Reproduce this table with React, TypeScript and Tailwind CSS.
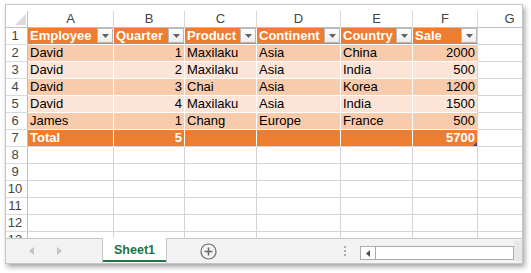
import React from 'react';

interface Col {
  letter: string;
  w: string;
}

const cols: Col[] = [
  { letter: 'A', w: 'w-[86px]' },
  { letter: 'B', w: 'w-[71px]' },
  { letter: 'C', w: 'w-[72px]' },
  { letter: 'D', w: 'w-[84px]' },
  { letter: 'E', w: 'w-[72px]' },
  { letter: 'F', w: 'w-[65px]' },
  { letter: 'G', w: 'w-[64px]' },
];

const headers = ['Employee', 'Quarter', 'Product', 'Continent', 'Country', 'Sale'];

const rows: (string | number)[][] = [
  ['David', 1, 'Maxilaku', 'Asia', 'China', 2000],
  ['David', 2, 'Maxilaku', 'Asia', 'India', 500],
  ['David', 3, 'Chai', 'Asia', 'Korea', 1200],
  ['David', 4, 'Maxilaku', 'Asia', 'India', 1500],
  ['James', 1, 'Chang', 'Europe', 'France', 500],
];

const totals: (string | number)[] = ['Total', 5, '', '', '', 5700];

const FilterButton: React.FC = () => (
  <div className="flex-none w-[16px] h-[15px] mb-px border border-[#b8b8b8] bg-gradient-to-b from-white to-[#ededed] flex items-center justify-center">
    <svg width="7" height="4" viewBox="0 0 7 4">
      <path d="M0 0 H7 L3.5 4 Z" fill="#606060" />
    </svg>
  </div>
);

const RowHeader: React.FC<{ n: number }> = ({ n }) => (
  <div className="flex-none w-[22px] h-[17px] border-r border-b border-r-[#bfbfbf] border-b-[#dadada] text-[13px] leading-[16px] text-[#444] text-center pr-[3px]">
    {n}
  </div>
);

const App: React.FC = () => {
  const bodyRows = [...rows, totals];

  return (
    <div className="w-[531px] h-[273px] bg-white pt-[4px] pl-[5px] font-['Liberation_Sans',Arial,sans-serif]">
      <div className="w-[518px] h-[260px] border border-[#c6c6c6] bg-white shadow-[2px_3px_5px_rgba(0,0,0,0.35)] flex flex-col overflow-hidden">
        {/* grid */}
        <div className="h-[233px] pt-[6px] overflow-hidden flex-none">
          {/* column letters */}
          <div className="flex h-[17px]">
            <div className="flex-none w-[22px] h-[17px] border-r border-b border-[#bfbfbf] flex items-end justify-end pr-[1px] pb-[2px]">
              <svg width="11" height="11" viewBox="0 0 11 11">
                <path d="M11 0 V11 H0 Z" fill="#dcdcdc" />
              </svg>
            </div>
            {cols.map((c) => (
              <div
                key={c.letter}
                className={`flex-none ${c.w} h-[17px] border-r border-b border-r-[#dadada] border-b-[#bfbfbf] text-[13px] leading-[16px] text-[#444] text-center`}
              >
                {c.letter}
              </div>
            ))}
          </div>

          {/* row 1: table header */}
          <div className="flex h-[17px]">
            <RowHeader n={1} />
            {headers.map((h, i) => (
              <div
                key={h}
                className={`flex-none ${cols[i].w} h-[17px] bg-[#ed7d31] border-b border-r border-b-white ${i === 5 ? 'border-r-[#d4d4d4]' : 'border-r-white'} flex items-start`}
              >
                <span className="flex-1 pl-[2px] text-[13px] leading-[16px] font-bold text-white whitespace-nowrap overflow-hidden">
                  {h}
                </span>
                <FilterButton />
              </div>
            ))}
            <div className="flex-none w-[64px] h-[17px] border-b border-[#d4d4d4]" />
          </div>

          {/* data + total rows */}
          {bodyRows.map((r, ri) => {
            const isTotal = ri === bodyRows.length - 1;
            const bg = isTotal ? 'bg-[#ed7d31]' : ri % 2 === 0 ? 'bg-[#f8cbad]' : 'bg-[#fce4d6]';
            return (
              <div key={ri} className="flex h-[17px]">
                <RowHeader n={ri + 2} />
                {r.map((v, ci) => (
                  <div
                    key={ci}
                    className={`relative flex-none ${cols[ci].w} h-[17px] ${bg} border-b border-r ${isTotal ? 'border-b-[#d4d4d4]' : 'border-b-white'} ${ci === 5 ? 'border-r-[#d4d4d4]' : 'border-r-white'} px-[2px] text-[13px] leading-[16px] whitespace-nowrap ${typeof v === 'number' ? 'text-right' : 'text-left'} ${isTotal ? 'font-bold text-white' : 'text-black'}`}
                  >
                    {v}
                    {isTotal && ci === 5 && (
                      <svg className="absolute right-0 bottom-0" width="4" height="4" viewBox="0 0 4 4">
                        <path d="M4 0 V4 H0 Z" fill="#3f3f8f" />
                      </svg>
                    )}
                  </div>
                ))}
                <div className="flex-none w-[64px] h-[17px] border-b border-[#d4d4d4]" />
              </div>
            );
          })}

          {/* empty rows 8-13 */}
          {[8, 9, 10, 11, 12, 13].map((n) => (
            <div key={n} className="flex h-[17px]">
              <RowHeader n={n} />
              {cols.map((c) => (
                <div
                  key={c.letter}
                  className={`flex-none ${c.w} h-[17px] border-r border-b border-[#d4d4d4]`}
                />
              ))}
            </div>
          ))}
        </div>

        {/* sheet tab bar */}
        <div className="flex-none h-[25px] border-t border-[#c6c6c6] bg-[#f3f3f3] flex items-stretch">
          <div className="flex-none w-[96px] flex items-center">
            <svg className="ml-[23px]" width="5" height="8" viewBox="0 0 5 8">
              <path d="M5 0 V8 L0 4 Z" fill="#c3c3c3" />
            </svg>
            <svg className="ml-[23px]" width="5" height="8" viewBox="0 0 5 8">
              <path d="M0 0 V8 L5 4 Z" fill="#c3c3c3" />
            </svg>
          </div>
          <div className="flex-none w-[65px] -mt-px bg-white border-l border-r border-[#c6c6c6] flex flex-col">
            <div className="flex-1 flex items-center justify-center text-[12.5px] font-bold text-[#217346] pt-[2px]">
              Sheet1
            </div>
            <div className="h-[2px] bg-[#217346] mb-[1px]" />
          </div>
          <div className="flex-none ml-[33px] flex items-center">
            <svg width="17" height="17" viewBox="0 0 17 17">
              <circle cx="8.5" cy="8.5" r="7.5" fill="none" stroke="#6b6b6b" strokeWidth="1.2" />
              <path d="M8.5 4.5 V12.5 M4.5 8.5 H12.5" stroke="#6b6b6b" strokeWidth="1.6" />
            </svg>
          </div>
          <div className="flex-1" />
          <div className="flex-none flex flex-col justify-center gap-[2px] mr-[14px]">
            <div className="w-[2px] h-[2px] bg-[#b0b0b0]" />
            <div className="w-[2px] h-[2px] bg-[#b0b0b0]" />
            <div className="w-[2px] h-[2px] bg-[#b0b0b0]" />
          </div>
          <div className="flex-none w-[154px] h-[14px] mt-[7px] border border-[#ababab] bg-white flex">
            <div className="flex-none w-[15px] border-r border-[#ababab] flex items-center justify-center">
              <svg width="4" height="7" viewBox="0 0 4 7">
                <path d="M4 0 V7 L0 3.5 Z" fill="#505050" />
              </svg>
            </div>
          </div>
          <div className="flex-none w-[8px] my-[2px] bg-[#e8e8e8]" />
        </div>
      </div>
    </div>
  );
};

export default App;
